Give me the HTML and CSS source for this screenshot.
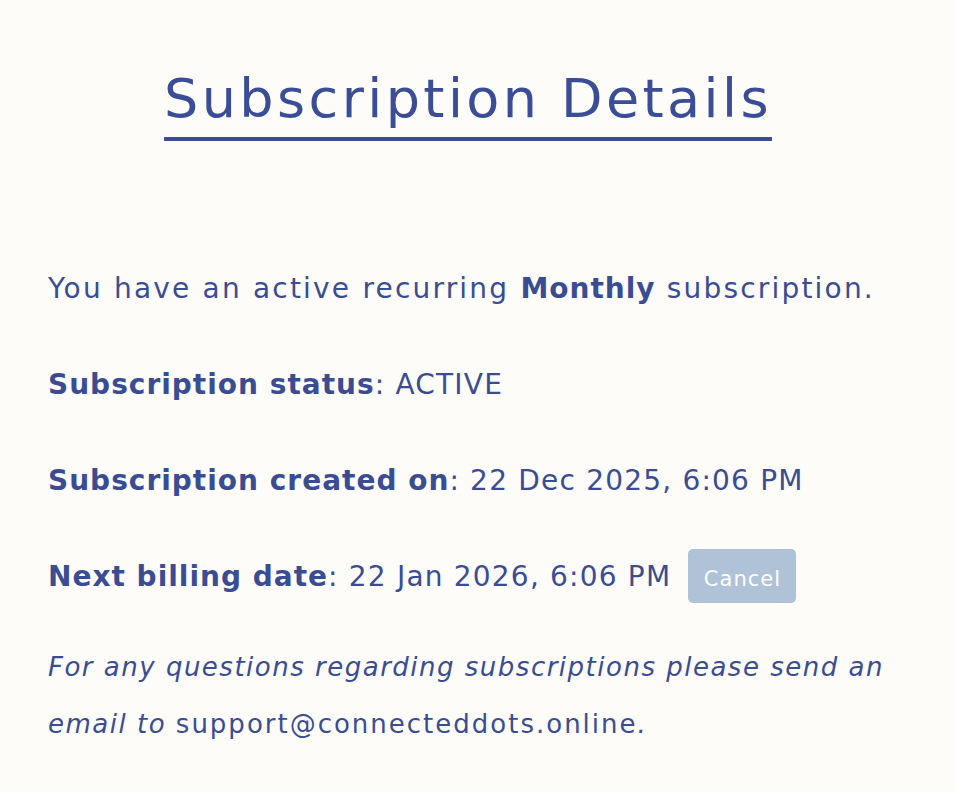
FILE: index.html
```html
<!DOCTYPE html>
<html lang="en">
<head>
<meta charset="utf-8">
<title>Subscription Details</title>
<link rel="stylesheet" href="styles.css">
</head>
<body>
<main class="page">
  <h1 class="title">Subscription Details</h1>
  <p class="row">You have an active recurring <strong>Monthly</strong> subscription.</p>
  <p class="row"><strong>Subscription status</strong><span class="value">: ACTIVE</span></p>
  <p class="row"><strong>Subscription created on</strong><span class="value">: 22 Dec 2025, 6:06 PM</span></p>
  <p class="row row-last"><strong>Next billing date</strong><span class="value">: 22 Jan 2026, 6:06 PM</span> <button class="cancel" type="button">Cancel</button></p>
  <p class="note"><em>For any questions regarding subscriptions please send an email to </em><a class="mail" href="#">support@connecteddots.online</a><em>.</em></p>
</main>
</body>
</html>
```
FILE: styles.css
```css
html, body {
  margin: 0;
  padding: 0;
  background: #fdfcf8;
}
body {
  font-family: "DejaVu Sans", sans-serif;
  color: #3a4d94;
}
.page {
  width: 840px;
  margin-left: 48px;
  padding-top: 69px;
}
.title {
  margin: 0 0 131px;
  text-align: center;
  font-size: 54px;
  line-height: 60px;
  font-weight: 400;
  letter-spacing: 3.4px;
  color: #3a4d96;
  text-decoration: underline;
  text-decoration-thickness: 4px;
  text-underline-offset: 20px;
}
.row {
  margin: 0 0 39px;
  font-size: 28px;
  line-height: 57px;
  letter-spacing: 2.2px;
}
.row strong {
  font-weight: 700;
  letter-spacing: 1px;
}
.row .value {
  letter-spacing: 1.2px;
}
.row-last {
  margin-bottom: 34px;
}
.cancel {
  display: inline-block;
  box-sizing: border-box;
  width: 108px;
  height: 54px;
  margin-left: 6px;
  padding: 6px 0 0;
  border: none;
  border-radius: 5px;
  background: #afc2d8;
  color: #ffffff;
  font-family: "DejaVu Sans", sans-serif;
  font-size: 21px;
  line-height: 48px;
  letter-spacing: 1px;
  text-align: center;
  vertical-align: baseline;
  cursor: pointer;
}
.note {
  margin: 0;
  font-size: 26px;
  line-height: 57px;
  letter-spacing: 1.5px;
}
.note em {
  font-style: italic;
}
.mail {
  color: #3a4d94;
  text-decoration: none;
  letter-spacing: 2px;
}
```
